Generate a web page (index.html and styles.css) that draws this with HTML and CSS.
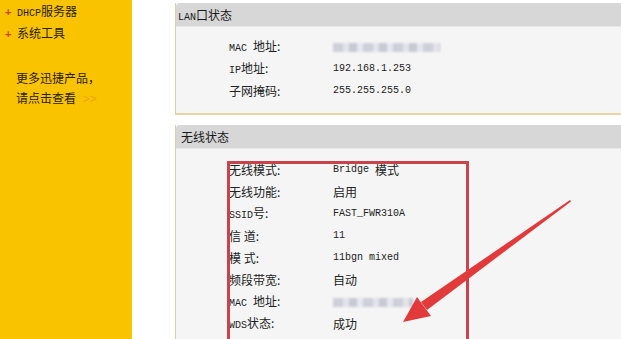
FILE: index.html
```html
<!DOCTYPE html>
<html lang="zh">
<head>
<meta charset="utf-8">
<link rel="stylesheet" href="styles.css">
</head>
<body>
<aside class="sidebar">
  <div class="nav-item"><span class="plus">+</span><span class="m">DHCP</span>服务器</div>
  <div class="nav-item"><span class="plus">+</span>系统工具</div>
  <div class="promo">更多迅捷产品，<br>请点击查看 <span class="gt">&gt;&gt;</span></div>
</aside>
<main class="content">
  <section class="panel lan">
    <div class="panel-head"><span class="m">LAN</span>口状态</div>
    <div class="panel-body">
      <div class="row"><span class="label"><span class="m">MAC&nbsp;</span>地址:</span><span class="value"><span class="blur w107"></span></span></div>
      <div class="row"><span class="label"><span class="m">IP</span>地址:</span><span class="value m">192.168.1.253</span></div>
      <div class="row"><span class="label">子网掩码:</span><span class="value m">255.255.255.0</span></div>
    </div>
  </section>
  <section class="panel wl">
    <div class="panel-head">无线状态</div>
    <div class="panel-body">
      <div class="row"><span class="label">无线模式:</span><span class="value"><span class="m">Bridge&nbsp;</span>模式</span></div>
      <div class="row"><span class="label">无线功能:</span><span class="value">启用</span></div>
      <div class="row"><span class="label"><span class="m">SSID</span>号:</span><span class="value m">FAST_FWR310A</span></div>
      <div class="row"><span class="label">信 道:</span><span class="value m">11</span></div>
      <div class="row"><span class="label">模 式:</span><span class="value m">11bgn mixed</span></div>
      <div class="row"><span class="label">频段带宽:</span><span class="value">自动</span></div>
      <div class="row"><span class="label"><span class="m">MAC&nbsp;</span>地址:</span><span class="value"><span class="blur w80"></span></span></div>
      <div class="row"><span class="label"><span class="m">WDS</span>状态:</span><span class="value">成功</span></div>
      <div class="highlight"></div>
    </div>
  </section>
</main>
<svg class="arrow" width="621" height="339" viewBox="0 0 621 339">
  <polygon points="570,200 571,201.5 427,310 421,302" fill="#e23a3a"/>
  <polygon points="403,322 417,297 431,316" fill="#e23a3a"/>
</svg>
</body>
</html>
```
FILE: styles.css
```css
html, body {
  margin: 0;
  padding: 0;
  background: #ffffff;
  overflow: hidden;
}
body {
  display: flex;
  width: 621px;
  height: 339px;
  font-family: "Noto Sans CJK SC", "Liberation Mono", sans-serif;
  font-size: 12px;
  color: #222222;
  position: relative;
}
.m {
  font-family: "Liberation Mono", "Noto Sans CJK SC", monospace;
  font-size: 10px;
}
.sidebar {
  width: 132px;
  flex: none;
  background: #f9c300;
  padding-top: 2px;
  box-sizing: border-box;
}
.nav-item {
  height: 22px;
  line-height: 18px;
  padding-left: 5px;
  color: #2a2000;
}
.plus {
  display: inline-block;
  width: 12px;
  color: #c8461a;
  font-weight: bold;
  font-family: "Liberation Sans", sans-serif;
  font-size: 11px;
}
.promo {
  margin-top: 22px;
  padding-left: 16px;
  line-height: 20px;
  color: #2a2000;
}
.gt {
  color: #e9a800;
  font-family: "Liberation Sans", sans-serif;
  margin-left: 4px;
}
.content {
  flex: 1;
  padding-left: 43px;
  padding-top: 3px;
  height: 339px;
  overflow: hidden;
}
.panel {
  border-left: 1px solid #e2cfa6;
  border-bottom: 2px solid #ecd3a4;
  margin-bottom: 10px;
}
.panel-head {
  height: 23px;
  line-height: 23px;
  background: #d7d7d7;
  border-top-left-radius: 4px;
  border-bottom: 1px solid #e9e9e9;
  padding-left: 2px;
  color: #1a1a1a;
}
.wl .panel-head {
  padding-left: 5px;
}
.panel-body {
  background: #f5f5f5;
  padding: 9px 0 11px 53px;
  position: relative;
}
.wl .panel-body {
  padding-top: 10px;
}
.row {
  display: flex;
  height: 22px;
  line-height: 22px;
  align-items: center;
}
.label {
  width: 104px;
  flex: none;
}
.value {
  display: flex;
  align-items: center;
}
.blur {
  display: inline-block;
  height: 9px;
  background: repeating-linear-gradient(90deg, #cfcfda 0 10px, #e3e3ea 10px 16px, #c9c9d4 16px 24px, #e6e6ee 24px 30px);
  filter: blur(1px);
}
.w107 { width: 107px; }
.w80 { width: 80px; }
.highlight {
  position: absolute;
  left: 51px;
  top: 12px;
  width: 242px;
  height: 300px;
  border: 3px solid #c9434c;
  box-sizing: border-box;
}
.arrow {
  position: absolute;
  left: 0;
  top: 0;
  pointer-events: none;
}
```
